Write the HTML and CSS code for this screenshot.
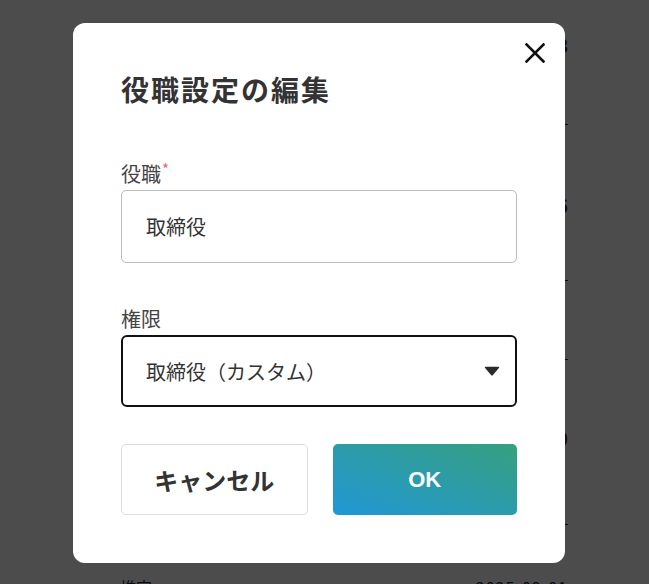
FILE: index.html
```html
<!DOCTYPE html>
<html lang="ja">
<head>
<meta charset="utf-8">
<title>役職設定の編集</title>
<link rel="stylesheet" href="styles.css">
</head>
<body>
<main class="page">
  <div class="row row-a"><span class="row-label">役員</span><span class="row-value">3</span></div>
  <div class="row row-b"><span class="row-label">社員</span><span class="row-value">16</span></div>
  <div class="row row-c"><span class="row-label">部署</span><span class="row-value"></span></div>
  <div class="row row-d"><span class="row-label">差額</span><span class="row-value neg">-120</span></div>
  <div class="row row-e"><span class="row-label">推定</span><span class="row-value small">2025-09-01</span></div>
</main>
<div class="overlay"></div>
<section class="modal" role="dialog" aria-labelledby="modal-title">
  <button class="close" aria-label="閉じる">
    <svg viewBox="0 0 20 20" width="20" height="20"><path d="M1.5 1.5 L18.5 18.5 M18.5 1.5 L1.5 18.5" stroke="#111" stroke-width="2.6" stroke-linecap="square" fill="none"/></svg>
  </button>
  <h2 id="modal-title" class="title">役職設定の編集</h2>
  <div class="field">
    <label class="label">役職<span class="req">*</span></label>
    <div class="input">取締役</div>
  </div>
  <div class="field field-select">
    <label class="label">権限</label>
    <div class="select">
      <span>取締役（カスタム）</span>
      <svg class="caret" viewBox="0 0 16 10" width="16" height="10"><path d="M1.6 0.8 H14.4 Q15.8 0.8 14.9 2 L9 8.9 Q8 10 7 8.9 L1.1 2 Q0.2 0.8 1.6 0.8 Z" fill="#2b2b2b"/></svg>
    </div>
  </div>
  <div class="actions">
    <button class="btn btn-cancel">キャンセル</button>
    <button class="btn btn-ok">OK</button>
  </div>
</section>
</body>
</html>
```

FILE: styles.css
```css
html, body {
  margin: 0;
  padding: 0;
  width: 649px;
  height: 584px;
  overflow: hidden;
  background: #ffffff;
  font-family: "Noto Sans CJK JP", "Noto Sans", sans-serif;
}

.page {
  width: 448px;
  margin-left: 120px;
  display: flex;
  flex-direction: column;
}

.row {
  display: flex;
  justify-content: space-between;
  align-items: flex-start;
  border-bottom: 1px solid #1c2b48;
  color: #1c2b48;
  font-size: 18px;
  line-height: 20px;
}
.row-a { height: 125px; padding-top: 35px; box-sizing: border-box; }
.row-b { height: 156px; padding-top: 190px; box-sizing: border-box; padding-top: 70px; }
.row-c { height: 78px; }
.row-d { height: 165px; padding-top: 68px; box-sizing: border-box; }
.row-e { border-bottom: none; padding-top: 52px; font-size: 16px; }
.row-value { font-weight: bold; }
.row-value.neg { color: #7a1a1a; }
.row-value.small { font-weight: normal; letter-spacing: 1px; }

.overlay {
  position: fixed;
  inset: 0;
  background: rgba(0, 0, 0, 0.7);
}

.modal {
  position: fixed;
  left: 73px;
  top: 23px;
  width: 492px;
  height: 540px;
  box-sizing: border-box;
  padding: 48px;
  background: #ffffff;
  border-radius: 12px;
  display: flex;
  flex-direction: column;
}

.close {
  position: absolute;
  top: 20px;
  right: 20px;
  width: 20px;
  height: 20px;
  padding: 0;
  border: none;
  background: none;
  display: flex;
}

.title {
  margin: 0 0 53px;
  font-size: 28px;
  line-height: 36px;
  font-weight: bold;
  color: #333333;
  letter-spacing: 2px;
}

.field { display: flex; flex-direction: column; }
.field-select { margin-top: 42px; }

.label {
  font-size: 20px;
  line-height: 28px;
  color: #444444;
  margin-bottom: 2px;
  display: flex;
  align-items: flex-start;
}
.req {
  color: #ec6a62;
  font-size: 15px;
  line-height: 18px;
  margin-left: 1px;
}

.input {
  height: 73px;
  box-sizing: border-box;
  border: 1px solid #bdbdbd;
  border-radius: 5px;
  padding: 0 24px;
  display: flex;
  align-items: center;
  font-size: 20px;
  color: #333333;
}

.select {
  height: 72px;
  box-sizing: border-box;
  border: 2.5px solid #111111;
  border-radius: 6px;
  padding: 0 15px 0 23px;
  display: flex;
  align-items: center;
  justify-content: space-between;
  font-size: 20px;
  color: #333333;
}

.actions {
  margin-top: 37px;
  display: flex;
  gap: 25px;
}

.btn {
  flex: 1;
  height: 71px;
  border-radius: 5px;
  font-family: "Liberation Sans", "Noto Sans CJK JP", sans-serif;
  font-weight: bold;
  cursor: pointer;
}
.btn-cancel {
  background: #ffffff;
  border: 1px solid #dddddd;
  color: #333333;
  font-size: 24px;
  font-family: "Noto Sans CJK JP", sans-serif;
}
.btn-ok {
  border: none;
  color: #ffffff;
  font-size: 22px;
  background: linear-gradient(to top right, #2097d6, #37a07f);
}
```
